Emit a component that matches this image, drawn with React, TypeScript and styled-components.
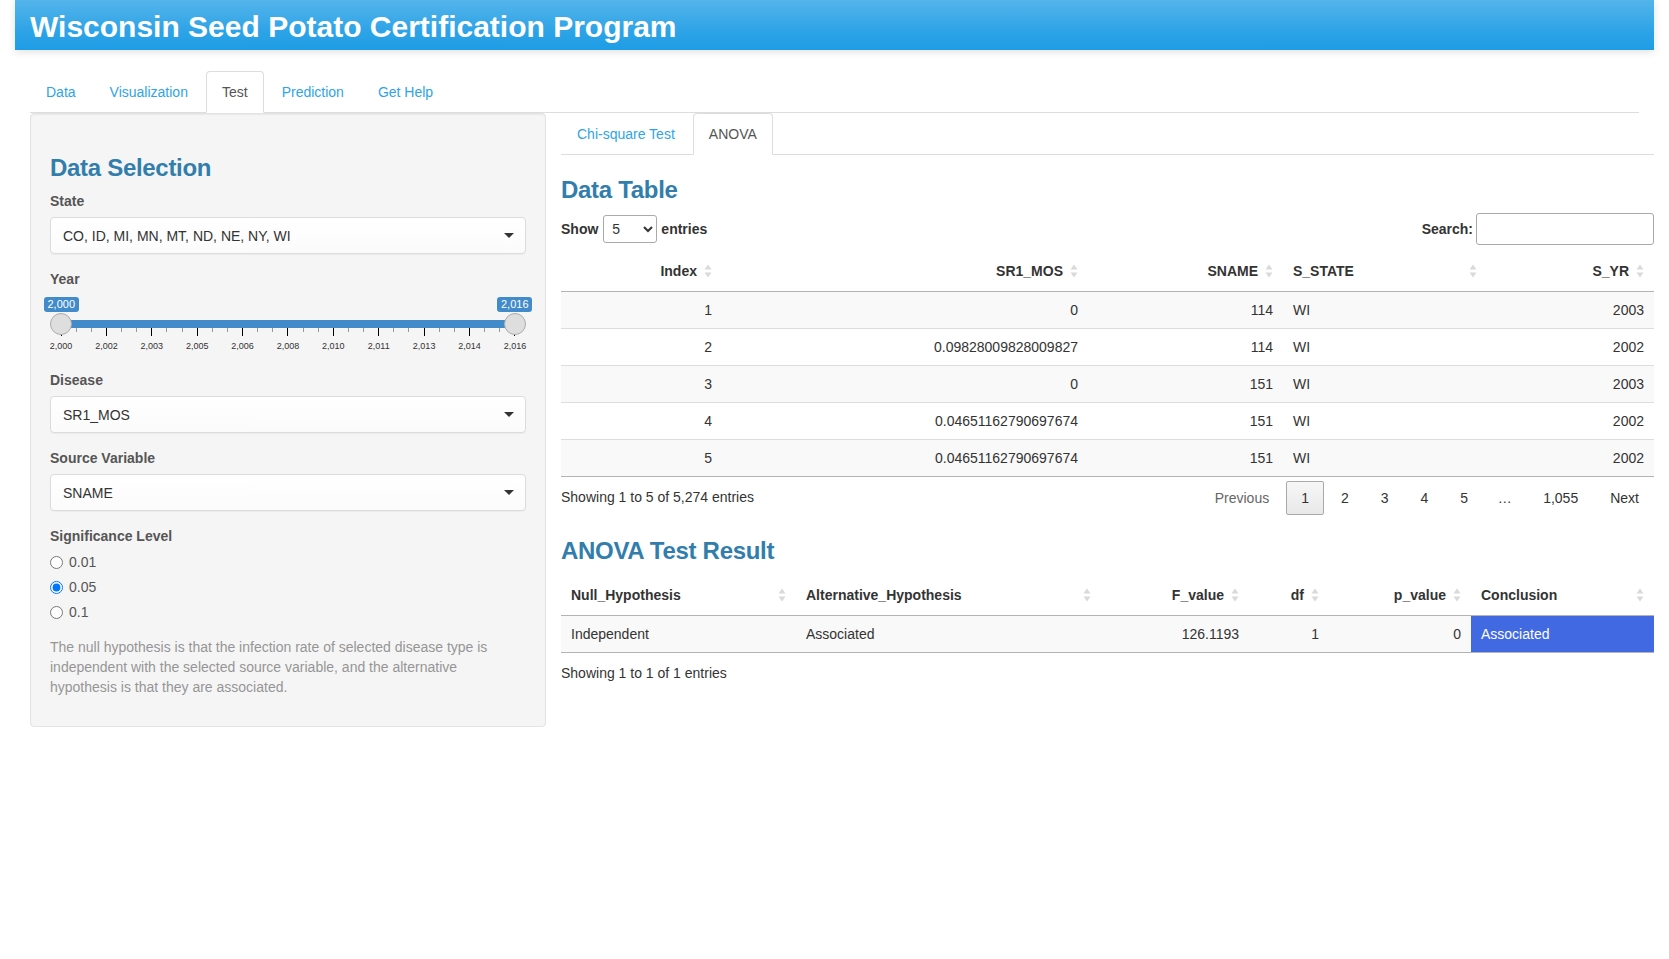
import React from 'react';
import styled, { createGlobalStyle } from 'styled-components';

const GlobalStyle = createGlobalStyle`
  html, body { margin: 0; padding: 0; background: #fff; }
  body {
    font-family: "Liberation Sans", Helvetica, Arial, sans-serif;
    font-size: 14px;
    line-height: 1.42857143;
    color: #555;
  }
  * { box-sizing: border-box; }
`;

const Page = styled.div`
  padding: 0 15px;
`;

const TitleBar = styled.header`
  height: 50px;
  display: flex;
  align-items: center;
  padding: 3px 15px 0;
  background-image: linear-gradient(#54b4eb, #2fa4e7 60%, #1d9ce5);
  box-shadow: 0 2px 8px rgba(0, 0, 0, 0.12);
`;

const Title = styled.h1`
  margin: 0;
  font-size: 30px;
  font-weight: bold;
  line-height: 1;
  color: #fff;
`;

const MainNavWrap = styled.div`
  margin: 21px 15px 0;
`;

const NavTabs = styled.ul`
  display: flex;
  margin: 0;
  padding: 0;
  list-style: none;
  border-bottom: 1px solid #ddd;
`;

const TabItem = styled.li<{ $active?: boolean }>`
  margin: 0 2px -1px 0;
  padding: 10px 15px;
  line-height: 20px;
  border: 1px solid transparent;
  border-radius: 4px 4px 0 0;
  color: ${(p) => (p.$active ? '#555' : '#2fa4e7')};
  background: ${(p) => (p.$active ? '#fff' : 'transparent')};
  border-color: ${(p) => (p.$active ? '#ddd #ddd transparent' : 'transparent')};
  cursor: pointer;
`;

const Layout = styled.div`
  display: grid;
  grid-template-columns: 516px 1fr;
  column-gap: 15px;
  padding-left: 15px;
  align-items: start;
`;

const Well = styled.aside`
  background: #f5f5f5;
  border: 1px solid #e3e3e3;
  border-radius: 4px;
  padding: 19px;
  box-shadow: inset 0 1px 1px rgba(0, 0, 0, 0.05);
`;

const Heading = styled.h3`
  margin: 22px 0 10px;
  font-size: 24px;
  font-weight: bold;
  letter-spacing: -0.3px;
  line-height: 1.1;
  color: #317eac;
`;

const FormGroup = styled.div`
  margin-bottom: 15px;
`;

const Label = styled.label`
  display: block;
  margin-bottom: 6px;
  font-weight: bold;
  line-height: 20px;
  color: #555;
`;

const SelectBox = styled.div`
  height: 37px;
  display: flex;
  align-items: center;
  padding: 0 11px 0 12px;
  background: linear-gradient(#fff, #fbfbfb);
  border: 1px solid #dcdcdc;
  border-radius: 4px;
  color: #333;
  box-shadow: 0 1px 1px rgba(0, 0, 0, 0.04);
`;

const Caret = styled.span`
  margin-left: auto;
  width: 0;
  height: 0;
  border-style: solid;
  border-width: 5px 5px 0;
  border-color: #333 transparent transparent;
`;

const Slider = styled.div`
  padding: 2px 0 3px;
`;

const BadgeRow = styled.div`
  display: flex;
  justify-content: space-between;
  margin: 0 -6px;
`;

const Badge = styled.span`
  background: #428bca;
  color: #fff;
  font-size: 11px;
  line-height: 13px;
  padding: 1px 3.5px;
  border-radius: 3px;
`;

const TrackRow = styled.div`
  margin-top: 1px;
  height: 22px;
  display: flex;
  justify-content: space-between;
  background: linear-gradient(#428bca, #428bca) no-repeat center / calc(100% - 22px) 8px;
`;

const Handle = styled.span`
  position: relative;
  z-index: 1;
  width: 22px;
  height: 22px;
  border-radius: 50%;
  border: 1px solid #ababab;
  background: #dedede;
`;

const TickRow = styled.div`
  margin: -7px 10.5px 0;
  height: 8px;
  display: flex;
  justify-content: space-between;
  align-items: flex-start;
`;

const Tick = styled.span<{ $major?: boolean }>`
  width: 1px;
  height: ${(p) => (p.$major ? '8px' : '4px')};
  background: ${(p) => (p.$major ? '#000' : '#999')};
`;

const TickLabels = styled.div`
  margin: 4px -9px 0;
  display: flex;
  justify-content: space-between;
  font-size: 9px;
  line-height: 12px;
  color: #333;
`;

const TickLabel = styled.span`
  width: 40px;
  text-align: center;
`;

const RadioGroup = styled.div`
  display: flex;
  flex-direction: column;
  gap: 5px;
  margin-bottom: 15px;
`;

const RadioLabel = styled.label`
  display: flex;
  align-items: center;
  height: 20px;
  color: #555;
`;

const RadioInput = styled.input`
  width: 13px;
  height: 13px;
  margin: 0 6px 0 0;
`;

const HelpText = styled.p`
  margin: 0 0 10px;
  color: #959595;
  line-height: 20px;
`;

const MainPanel = styled.main`
  min-width: 0;
`;

const TableWrap = styled.div`
  color: #333;
`;

const Controls = styled.div`
  height: 32px;
  margin-bottom: 6px;
  display: flex;
  justify-content: space-between;
  align-items: center;
`;

const ControlLabel = styled.label`
  display: flex;
  align-items: center;
  font-weight: bold;
  color: #333;
`;

const LengthSelect = styled.select`
  width: 54px;
  height: 28px;
  margin: 0 4px 0 5px;
  padding: 0 4px;
  border: 1px solid #aaa;
  border-radius: 3px;
  background: #fff;
  color: #333;
  font: 14px "Liberation Sans", Helvetica, Arial, sans-serif;
`;

const SearchInput = styled.input`
  width: 178px;
  height: 32px;
  margin-left: 3px;
  border: 1px solid #aaa;
  border-radius: 3px;
  background: #fff;
`;

const Table = styled.table`
  width: 100%;
  table-layout: fixed;
  border-collapse: separate;
  border-spacing: 0;
`;

const Th = styled.th`
  padding: 10px;
  line-height: 20px;
  font-weight: bold;
  color: #333;
  border-bottom: 1px solid #b3b3b3;
`;

const ThInner = styled.div<{ $align: 'left' | 'right' }>`
  display: flex;
  align-items: center;
  & > span {
    flex: 1;
    text-align: ${(p) => p.$align};
    white-space: nowrap;
  }
`;

const SortIcon = styled.svg`
  flex: none;
  margin-left: 7px;
  width: 8px;
  height: 16px;
`;

const Tr = styled.tr<{ $odd?: boolean }>`
  background: ${(p) => (p.$odd ? '#f9f9f9' : '#fff')};
  &:not(:first-child) > td {
    border-top: 1px solid #ddd;
  }
  &:last-child > td {
    border-bottom: 1px solid #b3b3b3;
  }
`;

const Td = styled.td<{ $align: 'left' | 'right'; $highlight?: boolean }>`
  padding: 8px 10px;
  line-height: 20px;
  text-align: ${(p) => p.$align};
  color: ${(p) => (p.$highlight ? '#fff' : '#333')};
  background: ${(p) => (p.$highlight ? '#4169e1' : 'transparent')};
  white-space: nowrap;
`;

const Footer = styled.div`
  display: flex;
  justify-content: space-between;
  align-items: flex-start;
  padding-bottom: 1px;
`;

const Info = styled.div`
  padding-top: 10px;
  line-height: 20px;
  color: #333;
`;

const Paging = styled.div`
  padding-top: 4px;
  display: flex;
  align-items: center;
`;

const PageButton = styled.span<{ $current?: boolean; $disabled?: boolean }>`
  margin-left: 2px;
  padding: 6px 14px;
  line-height: 20px;
  border: 1px solid ${(p) => (p.$current ? '#a9a9a9' : 'transparent')};
  border-radius: 2px;
  color: ${(p) => (p.$disabled ? '#666' : '#333')};
  background: ${(p) => (p.$current ? 'linear-gradient(#f7f7f7, #e8e8e8)' : 'transparent')};
`;

const Ellipsis = styled.span`
  padding: 0 14.5px;
  color: #333;
`;

type Col = { title: string; width: number; align: 'left' | 'right' };

const Sort = () => (
  <SortIcon viewBox="0 0 8 16">
    <polygon points="4,1.5 7.5,6.5 0.5,6.5" fill="#dadada" />
    <polygon points="0.5,9.5 7.5,9.5 4,14.5" fill="#dadada" />
  </SortIcon>
);

type Cell = { v: string; highlight?: boolean };

const DataTable = ({ cols, rows }: { cols: Col[]; rows: Cell[][] }) => (
  <Table>
    <colgroup>
      {cols.map((c) => (
        <col key={c.title} style={{ width: c.width }} />
      ))}
    </colgroup>
    <thead>
      <tr>
        {cols.map((c) => (
          <Th key={c.title}>
            <ThInner $align={c.align}>
              <span>{c.title}</span>
              <Sort />
            </ThInner>
          </Th>
        ))}
      </tr>
    </thead>
    <tbody>
      {rows.map((r, i) => (
        <Tr key={i} $odd={i % 2 === 0}>
          {r.map((cell, j) => (
            <Td key={j} $align={cols[j].align} $highlight={cell.highlight}>
              {cell.v}
            </Td>
          ))}
        </Tr>
      ))}
    </tbody>
  </Table>
);

const dataCols: Col[] = [
  { title: 'Index', width: 161, align: 'right' },
  { title: 'SR1_MOS', width: 366, align: 'right' },
  { title: 'SNAME', width: 195, align: 'right' },
  { title: 'S_STATE', width: 204, align: 'left' },
  { title: 'S_YR', width: 167, align: 'right' },
];

const dataRows: Cell[][] = [
  ['1', '0', '114', 'WI', '2003'],
  ['2', '0.09828009828009827', '114', 'WI', '2002'],
  ['3', '0', '151', 'WI', '2003'],
  ['4', '0.04651162790697674', '151', 'WI', '2002'],
  ['5', '0.04651162790697674', '151', 'WI', '2002'],
].map((r) => r.map((v) => ({ v })));

const resultCols: Col[] = [
  { title: 'Null_Hypothesis', width: 235, align: 'left' },
  { title: 'Alternative_Hypothesis', width: 305, align: 'left' },
  { title: 'F_value', width: 148, align: 'right' },
  { title: 'df', width: 80, align: 'right' },
  { title: 'p_value', width: 142, align: 'right' },
  { title: 'Conclusion', width: 183, align: 'left' },
];

const resultRows: Cell[][] = [
  [
    { v: 'Independent' },
    { v: 'Associated' },
    { v: '126.1193' },
    { v: '1' },
    { v: '0' },
    { v: 'Associated', highlight: true },
  ],
];

const years = ['2,000', '2,002', '2,003', '2,005', '2,006', '2,008', '2,010', '2,011', '2,013', '2,014', '2,016'];

const ticks = Array.from({ length: 31 }, (_, i) => i % 3 === 0);

const Select = ({ value }: { value: string }) => (
  <SelectBox>
    <span>{value}</span>
    <Caret />
  </SelectBox>
);

export default function App() {
  return (
    <>
      <GlobalStyle />
      <Page>
        <TitleBar>
          <Title>Wisconsin Seed Potato Certification Program</Title>
        </TitleBar>
        <MainNavWrap>
          <NavTabs>
            <TabItem>Data</TabItem>
            <TabItem>Visualization</TabItem>
            <TabItem $active>Test</TabItem>
            <TabItem>Prediction</TabItem>
            <TabItem>Get Help</TabItem>
          </NavTabs>
        </MainNavWrap>
        <Layout>
          <Well>
            <Heading>Data Selection</Heading>
            <FormGroup>
              <Label>State</Label>
              <Select value="CO, ID, MI, MN, MT, ND, NE, NY, WI" />
            </FormGroup>
            <FormGroup>
              <Label>Year</Label>
              <Slider>
                <BadgeRow>
                  <Badge>2,000</Badge>
                  <Badge>2,016</Badge>
                </BadgeRow>
                <TrackRow>
                  <Handle />
                  <Handle />
                </TrackRow>
                <TickRow>
                  {ticks.map((m, i) => (
                    <Tick key={i} $major={m} />
                  ))}
                </TickRow>
                <TickLabels>
                  {years.map((y) => (
                    <TickLabel key={y}>{y}</TickLabel>
                  ))}
                </TickLabels>
              </Slider>
            </FormGroup>
            <FormGroup>
              <Label>Disease</Label>
              <Select value="SR1_MOS" />
            </FormGroup>
            <FormGroup>
              <Label>Source Variable</Label>
              <Select value="SNAME" />
            </FormGroup>
            <Label>Significance Level</Label>
            <RadioGroup>
              {['0.01', '0.05', '0.1'].map((v) => (
                <RadioLabel key={v}>
                  <RadioInput type="radio" name="sig" defaultChecked={v === '0.05'} />
                  {v}
                </RadioLabel>
              ))}
            </RadioGroup>
            <HelpText>
              The null hypothesis is that the infection rate of selected disease type is independent with the
              selected source variable, and the alternative hypothesis is that they are associated.
            </HelpText>
          </Well>
          <MainPanel>
            <NavTabs>
              <TabItem>Chi-square Test</TabItem>
              <TabItem $active>ANOVA</TabItem>
            </NavTabs>
            <Heading>Data Table</Heading>
            <TableWrap>
              <Controls>
                <ControlLabel>
                  Show
                  <LengthSelect defaultValue="5">
                    <option value="5">5</option>
                    <option value="10">10</option>
                    <option value="25">25</option>
                  </LengthSelect>
                  entries
                </ControlLabel>
                <ControlLabel>
                  Search:
                  <SearchInput type="search" />
                </ControlLabel>
              </Controls>
              <DataTable cols={dataCols} rows={dataRows} />
              <Footer>
                <Info>Showing 1 to 5 of 5,274 entries</Info>
                <Paging>
                  <PageButton $disabled>Previous</PageButton>
                  <PageButton $current>1</PageButton>
                  <PageButton>2</PageButton>
                  <PageButton>3</PageButton>
                  <PageButton>4</PageButton>
                  <PageButton>5</PageButton>
                  <Ellipsis>…</Ellipsis>
                  <PageButton>1,055</PageButton>
                  <PageButton>Next</PageButton>
                </Paging>
              </Footer>
            </TableWrap>
            <Heading>ANOVA Test Result</Heading>
            <TableWrap>
              <DataTable cols={resultCols} rows={resultRows} />
              <Info>Showing 1 to 1 of 1 entries</Info>
            </TableWrap>
          </MainPanel>
        </Layout>
      </Page>
    </>
  );
}
